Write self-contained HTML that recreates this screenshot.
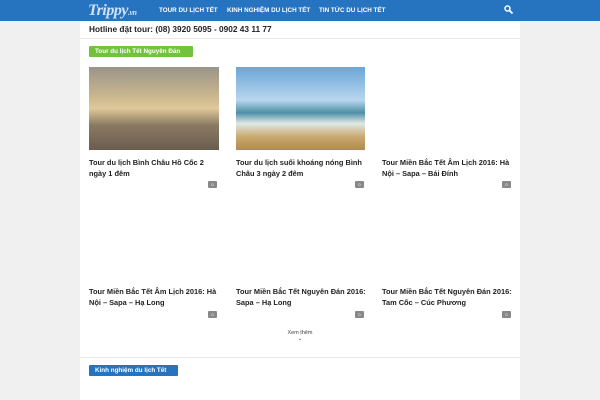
<!DOCTYPE html>
<html><head><meta charset="utf-8"><style>
body{margin:0;width:600px;height:400px;overflow:hidden;background:#f0f0f0;font-family:"Liberation Sans",sans-serif;position:relative}
.hd{position:absolute;left:0;top:0;width:600px;height:21px;background:#2673c0}
.logo{position:absolute;left:88px;top:2px;font:italic bold 16px "Liberation Serif",serif;color:#cfe3f7;letter-spacing:-0.5px}
.nav{position:absolute;top:7px;color:#fff;font-size:6.3px;font-weight:bold}
.box{position:absolute;left:80px;top:21px;width:440px;height:379px;background:#fff}
.hot{position:absolute;left:89px;top:24px;font-size:8.3px;font-weight:bold;color:#222}
.line{position:absolute;left:80px;width:440px;height:1px;background:#e8e8e8}
.lbl{position:absolute;color:#fff;font-size:6.3px;font-weight:bold;padding:0 6px;height:11px;line-height:11px;border-radius:1px}
.t{position:absolute;font-size:7.4px;font-weight:bold;color:#222;line-height:11px;width:130px}
.c{position:absolute;width:9px;height:7px;background:#888;border-radius:1px;color:#fff;font-size:4px;text-align:center;line-height:7px}
</style></head><body>
<div class="hd"></div>
<div class="logo">Trippy<span style="font-size:8px">.vn</span></div>
<div class="nav" style="left:159px">TOUR DU LỊCH TẾT</div>
<div class="nav" style="left:227px">KINH NGHIỆM DU LỊCH TẾT</div>
<div class="nav" style="left:319px">TIN TỨC DU LỊCH TẾT</div>
<svg style="position:absolute;left:504px;top:5px" width="9" height="9"><circle cx="3.5" cy="3.5" r="2.5" stroke="#fff" stroke-width="1.5" fill="none"/><line x1="5.5" y1="5.5" x2="8.5" y2="8.5" stroke="#fff" stroke-width="1.8"/></svg>
<div class="box"></div>
<div class="hot">Hotline đặt tour: (08) 3920 5095 - 0902 43 11 77</div>
<div class="line" style="top:38px"></div>
<div class="lbl" style="left:89px;top:46px;width:92px;background:#72c23c">Tour du lịch Tết Nguyên Đán</div>
<div style="position:absolute;left:89px;top:67px;width:130px;height:83px;background:linear-gradient(180deg,#9a948a 0%,#c9b68e 35%,#e0c89a 50%,#8a7a62 70%,#6a5d4e 100%)"></div>
<div style="position:absolute;left:236px;top:67px;width:129px;height:83px;background:linear-gradient(180deg,#6aa6d8 0%,#b9d6ee 40%,#4d8fa6 55%,#dfe9e5 68%,#c9a66a 85%,#b08a52 100%)"></div>
<div class="t" style="left:89px;top:157px">Tour du lịch Bình Châu Hồ Cốc 2 ngày 1 đêm</div>
<div class="t" style="left:236px;top:157px">Tour du lịch suối khoáng nóng Bình Châu 3 ngày 2 đêm</div>
<div class="t" style="left:382px;top:157px">Tour Miền Bắc Tết Âm Lịch 2016: Hà Nội – Sapa – Bái Đính</div>
<div class="c" style="left:208px;top:181px">0</div><div class="c" style="left:355px;top:181px">0</div><div class="c" style="left:502px;top:181px">0</div>
<div class="t" style="left:89px;top:286px">Tour Miền Bắc Tết Âm Lịch 2016: Hà Nội – Sapa – Hạ Long</div>
<div class="t" style="left:236px;top:286px">Tour Miền Bắc Tết Nguyên Đán 2016: Sapa – Hạ Long</div>
<div class="t" style="left:382px;top:286px">Tour Miền Bắc Tết Nguyên Đán 2016: Tam Cốc – Cúc Phương</div>
<div class="c" style="left:208px;top:311px">0</div><div class="c" style="left:355px;top:311px">0</div><div class="c" style="left:502px;top:311px">0</div>
<div style="position:absolute;left:280px;top:330px;width:40px;text-align:center;font-size:5.5px;color:#444">Xem thêm<br>⌄</div>
<div class="line" style="top:357px"></div>
<div class="lbl" style="left:89px;top:365px;width:77px;background:#2673c0">Kinh nghiệm du lịch Tết</div>
</body></html>
